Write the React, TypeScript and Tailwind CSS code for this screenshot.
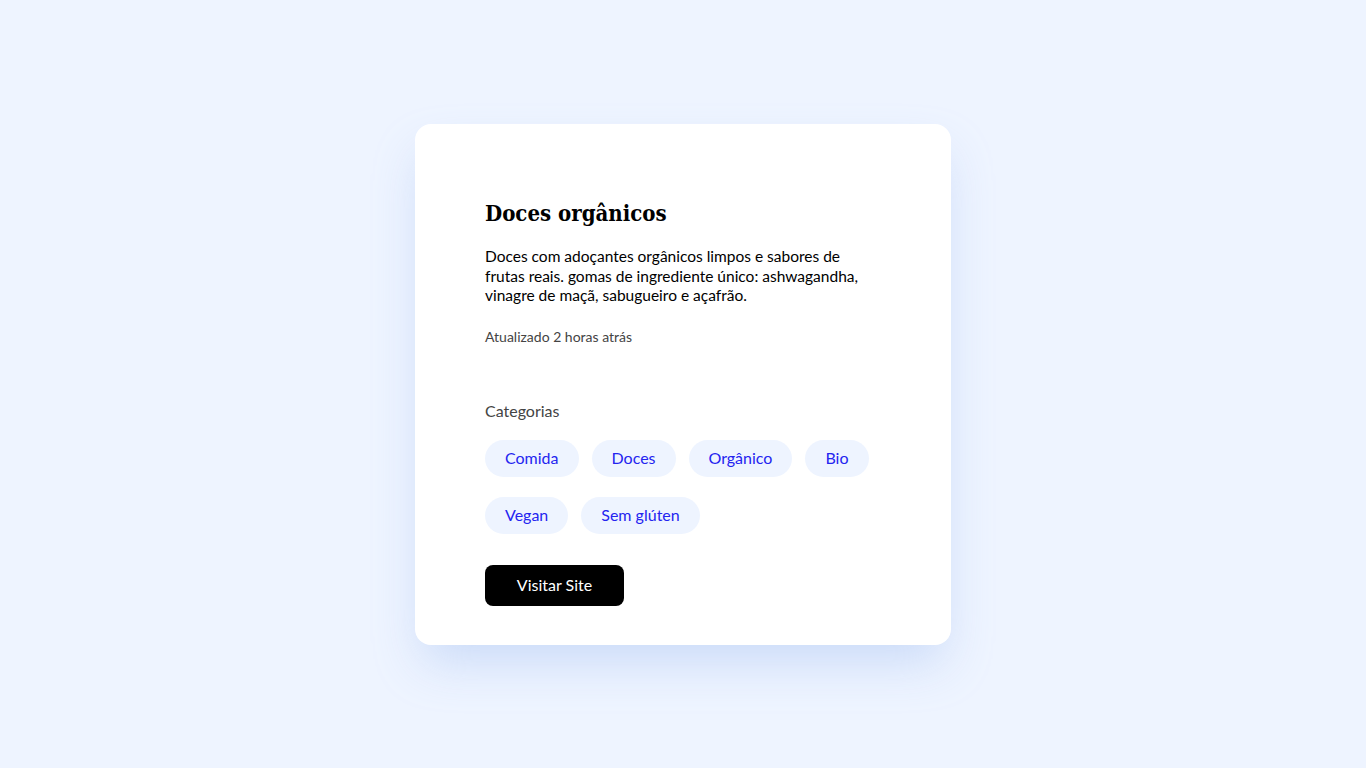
import React from "react";

const categories = ["Comida", "Doces", "Orgânico", "Bio", "Vegan", "Sem glúten"];

const Chip: React.FC<{ label: string }> = ({ label }) => (
  <span className="inline-flex h-[37px] items-center rounded-full bg-[#eef4ff] px-5 text-[16px] text-[#2424f0]">
    {label}
  </span>
);

export default function App() {
  return (
    <div className="flex min-h-screen items-start justify-center bg-[#eef4ff] pt-[124px] font-['Lato',sans-serif]">
      <div className="w-[536px] rounded-2xl bg-white px-[70px] pb-[39px] pt-[74px] shadow-[0_24px_48px_-8px_rgba(190,210,245,0.75)]">
        <h1 className="font-['DejaVu_Serif_Condensed','DejaVu_Serif',serif] text-[22px] font-bold leading-[30px] text-black [font-stretch:condensed]">
          Doces orgânicos
        </h1>
        <p className="mt-[19px] max-w-[390px] text-[15.5px] leading-[19.5px] text-black">
          Doces com adoçantes orgânicos limpos e sabores de frutas reais. gomas de ingrediente único: ashwagandha,
          vinagre de maçã, sabugueiro e açafrão.
        </p>
        <p className="mt-[22px] text-[14px] leading-[18px] text-[#444]">Atualizado 2 horas atrás</p>

        <p className="mt-[55px] text-[16px] leading-[20px] text-[#444]">Categorias</p>
        <div className="mt-[19px] flex max-w-[396px] flex-wrap gap-x-[13px] gap-y-[20px]">
          {categories.map((c) => (
            <Chip key={c} label={c} />
          ))}
        </div>

        <button className="mt-[31px] h-[41px] w-[139px] rounded-lg bg-black text-[16px] text-white">
          Visitar Site
        </button>
      </div>
    </div>
  );
}
